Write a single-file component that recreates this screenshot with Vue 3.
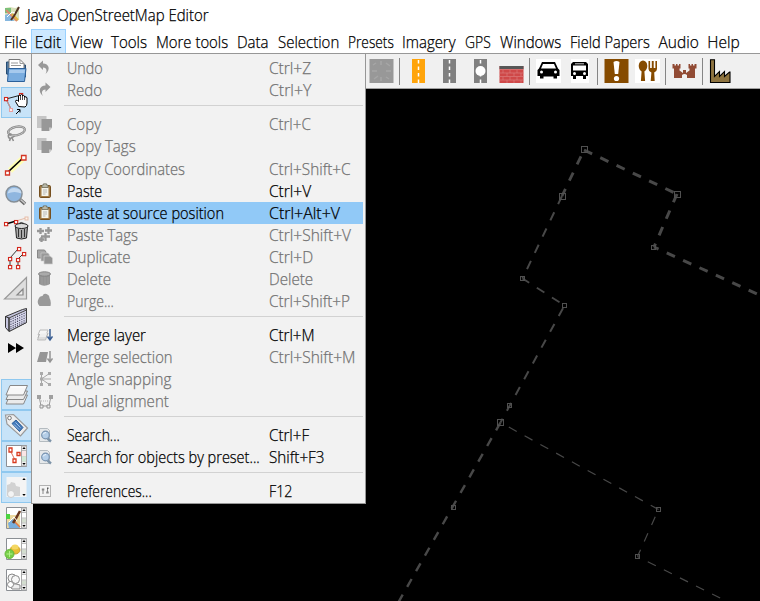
<script setup>
const vFit = {
  mounted(el, { value }) {
    const natural = el.offsetWidth
    if (value && natural) el.style.transform = `scaleX(${value / natural})`
  }
}

const menus = [
  ['File', 23], ['Edit', 26], ['View', 32], ['Tools', 36], ['More tools', 72],
  ['Data', 32], ['Selection', 61], ['Presets', 46], ['Imagery', 54], ['GPS', 26],
  ['Windows', 61], ['Field Papers', 80], ['Audio', 40], ['Help', 32]
]

const clipboard = '<rect x="2.5" y="2.5" width="11" height="12" rx="1.2" fill="#a17a45" stroke="#765020"/><rect x="4.5" y="4.5" width="7" height="8.5" fill="#f4f4ec"/><path d="M5 4.5V2h1.5V.8h3V2H11v2.500z" fill="#b8b8a8" stroke="#686858" stroke-width=".7"/><path d="M6 7h4M6 9h4M6 11h2.500" stroke="#aaa" stroke-width=".8"/>'
const copyIcon = '<path d="M0 0h9.500v12H0z" fill="#c5c5c5"/><path d="M4.500 3h10.500v8.500L12 15H4.500z" fill="#989898"/><path d="M15 11.500h-3V15z" fill="#c9c9c9"/>'
const magnifier = '<path d="M2.500 1.500h8l2 2v11h-10z" fill="#e5e8ea" stroke="#b4bbc0"/><path d="M10.500 11.500l3.500 3" stroke="#7d93a8" stroke-width="2.400"/><circle cx="8.500" cy="8" r="3.800" fill="#b4cee8" stroke="#7893b0" stroke-width="1.200"/><path d="M6 7.500q1-2 3-2" stroke="#eef6ff" fill="none"/>'

const entries = [
  { t: 'Undo', w: 36, k: 'Ctrl+Z', kw: 42, off: true, i: '<path d="M1 5L6 .5v3c6 0 8 6 2.500 10.500C10.500 10.500 9.500 7.500 6 7.500V10z" fill="#989898"/>' },
  { t: 'Redo', w: 35, k: 'Ctrl+Y', kw: 42, off: true, i: '<path d="M13.500 5L8.500 .5v3C2.500 3.500 .5 9.500 6 14 4 10.500 5 7.500 8.500 7.500V10z" fill="#989898"/>' },
  { sep: true },
  { t: 'Copy', w: 34, k: 'Ctrl+C', kw: 42, off: true, i: copyIcon },
  { t: 'Copy Tags', w: 69, off: true, i: copyIcon },
  { t: 'Copy Coordinates', w: 118, k: 'Ctrl+Shift+C', kw: 82, off: true, tall: true },
  { t: 'Paste', w: 35, k: 'Ctrl+V', kw: 42, i: clipboard },
  { t: 'Paste at source position', w: 157, k: 'Ctrl+Alt+V', kw: 71, hot: true, i: clipboard },
  { t: 'Paste Tags', w: 71, k: 'Ctrl+Shift+V', kw: 82, off: true, i: '<path d="M0 4h7M3.500 1v6M8 3.500h7M11.500 0v7M4 9.500h9M8.500 6v8M2 12.500h5M4.500 10v5" stroke="#969696" stroke-width="2.300"/>' },
  { t: 'Duplicate', w: 64, k: 'Ctrl+D', kw: 44, off: true, i: '<path d="M.5 1h7l1.500 2v6h-8.500z" fill="#a6a6a6" stroke="#888"/><path d="M4 4h7l1.500 2v6H4z" fill="#999" stroke="#d0d0d0" stroke-width=".6"/><path d="M7 7h6l2.500 2v6H7z" fill="#949494" stroke="#d0d0d0" stroke-width=".7"/>' },
  { t: 'Delete', w: 44, k: 'Delete', kw: 44, off: true, i: '<path d="M2 3v10q5 3.500 11 0V3z" fill="#949494"/><ellipse cx="7.500" cy="3" rx="6" ry="2.200" fill="#aaa" stroke="#858585"/><path d="M5 6v8M8 6v8M11 6v8" stroke="#a4a4a4" stroke-width=".6"/>' },
  { t: 'Purge...', w: 47, k: 'Ctrl+Shift+P', kw: 81, off: true, i: '<path d="M1.500 6q1-3 4-3 1-3 4-2 3 1 3 4 2 3 1 8h-11q-3-3-1-7z" fill="#999"/>' },
  { sep: true },
  { t: 'Merge layer', w: 79, k: 'Ctrl+M', kw: 46, i: '<path d="M3 3h8l-2 5H1z" fill="#f5f5f5" stroke="#bbb"/><path d="M2.500 7L1 11h8l2-5" fill="#eee" stroke="#aaa"/><path d="M1.500 10L.5 13h8l1-3" fill="#ddd" stroke="#bbb"/><path d="M13 2v10M10.500 9.500L13 13l2.500-3.500" fill="none" stroke="#3b5f93" stroke-width="1.500"/>' },
  { t: 'Merge selection', w: 106, k: 'Ctrl+Shift+M', kw: 86, off: true, i: '<path d="M3 3h8L9 13H0z" fill="#969696"/><path d="M13 2v10M10.500 9.500L13 13l2.500-3.500" fill="none" stroke="#949494" stroke-width="1.500"/>' },
  { t: 'Angle snapping', w: 104, off: true, i: '<path d="M4.500 3v11M4.500 8L13 2M4.500 8H14M4.500 8l8.500 6" stroke="#a7a7a7" fill="none"/><path d="M3 1h3v3H3zM3 12h3v3H3zM3 6.500h3v3H3zM11 1h3v3h-3zM11 12h3v3h-3z" fill="#aaa"/>' },
  { t: 'Dual alignment', w: 102, off: true, i: '<path d="M2 3l2 10h8l2-10" stroke="#999" fill="none"/><path d="M3 12h3v3H3zM10 12h3v3h-3z" fill="#eee" stroke="#929292"/><path d="M0 2h4v4H0zM12 2h4v4h-4z" fill="#a0a0a0"/><path d="M4 8l8 0" stroke="#b5b5b5" stroke-dasharray="1 1"/>' },
  { sep: true },
  { t: 'Search...', w: 53, k: 'Ctrl+F', kw: 40, i: magnifier },
  { t: 'Search for objects by preset...', w: 193, k: 'Shift+F3', kw: 55, i: magnifier },
  { sep: true },
  { t: 'Preferences...', w: 85, k: 'F12', kw: 23, i: '<rect x="2.500" y="2.500" width="11" height="11" fill="#f4f4f4" stroke="#b2b2b2"/><path d="M6 6v5M10.500 5v5" stroke="#888"/><path d="M4.800 5.500h2.500v2H4.800zM9.200 8.500h2.500v2H9.200z" fill="#888"/><path d="M10 4.500h1.500V6H10z" fill="#555"/>' }
]

const sq = (x, y) => `<rect x="${x - 1.5}" y="${y - 1.5}" width="3.200" height="3.200" fill="#fff" stroke="#d3261b" stroke-width="1.100"/>`

const tools = [
  { i: '<path d="M5.500 18V6h7l2 3h10v12z" fill="#51799f" stroke="#264c73"/><path d="M8 3.500h11l4 4V20H8z" fill="#fff" stroke="#777"/><path d="M19 3.500v4h4M10 7h7M10 9.500h10" fill="none" stroke="#999"/><path d="M7.500 12.500h17.500L23.500 25.500H6.500z" fill="#79acdf" stroke="#2c609a"/><path d="M8.500 14h15.500l-.5 3H8z" fill="#a6c9ed"/>' },
  { on: true, i: '<path d="M5 12l15-4M5 12l5 10" stroke="#222" fill="none"/><path d="M6 14l4 8" stroke="#e8a6a6"/>' + sq(5, 12) + sq(20, 8) + '<rect x="8.500" y="21.500" width="3" height="3" fill="#fee" stroke="#e7a0a0"/><path d="M17.500 19.500l-3-5q0-2 2-1l1 1V9q1-2 2 0V8q1-1 2 0v1q1-1 2 0v1q2-1 2.500 1v5q0 3-2 4z" fill="#fff" stroke="#000"/><path d="M19.500 9v4M21.500 9v4M23.500 10v3" stroke="#000" stroke-width=".7"/><path d="M15 27l4-4M16 22.500h3v3" stroke="#000" fill="none"/>' },
  { i: '<ellipse cx="15.500" cy="13" rx="8.500" ry="4.200" transform="rotate(-12 15.500 13)" fill="none" stroke="#858585" stroke-width="2.400"/><ellipse cx="15.500" cy="13" rx="8.500" ry="4.200" transform="rotate(-12 15.500 13)" fill="none" stroke="#ccc" stroke-width=".8"/><path d="M10.500 16q-4 0-3 3t6-1M10.500 19l2 4M9.500 20l-1 3" stroke="#8d8d8d" stroke-width="1.600" fill="none"/>' },
  { i: '<path d="M9 21.500L23 8.500" stroke="#ffffb4" stroke-width="6"/><path d="M7 23L23 8" stroke="#000" stroke-width="1.700"/><path d="M4.500 22h4v4h-4zM20.500 6.500h4.500v4.500h-4.500z" fill="#fff" stroke="#d33524" stroke-width="1.300"/>' },
  { i: '<path d="M18.500 19l5.500 5" stroke="#686868" stroke-width="3.500"/><path d="M19.500 19.500l4.500 4" stroke="#c8c8c8" stroke-width="1.500"/><circle cx="13" cy="14" r="8" fill="#8fb6df" stroke="#858e96" stroke-width="1.500"/><path d="M6.500 13.500q2-7 10-5 4 1 4 5-7-3-14 0z" fill="#c3d9f0"/>' },
  { i: '<path d="M5 13l10-3" stroke="#000" stroke-width="1.500"/><path d="M15 10l10-3" stroke="#e5bda9"/>' + sq(5, 13) + sq(15, 11) + '<rect x="24" y="6" width="3" height="3" fill="#fdf1e8" stroke="#e5bda9"/><path d="M14.500 15.500h12l-1 11.500q-5 2-10 0z" fill="#aaa" stroke="#222"/><ellipse cx="20.500" cy="15" rx="6.500" ry="2.500" fill="#d9d9d9" stroke="#222"/><path d="M18 12.500q2-2 5 0M17.500 18v8M20.500 19v8M23.500 18v8" stroke="#333" fill="none"/>' },
  { i: '<path d="M9 25v-9l8-9M17 24v-7l6-6" stroke="#333" fill="none"/>' + sq(9, 25) + sq(9, 17) + sq(18, 7) + sq(17, 25) + sq(17, 18) + sq(23, 12) },
  { i: '<path d="M3.500 26L25.500 4.500V26z" fill="#dedede" stroke="#999" stroke-width="1.200"/><path d="M16 22l6-6v6z" fill="#eee" stroke="#858585" stroke-width="1.200"/>' },
  { i: '<path d="M4.500 12.500l17-7 4-1v14L8 27.500 4.500 23.500z" fill="#c5c5de" stroke="#333"/><path d="M8 14L25.500 6v12.500L8 27.500z" fill="#d6d6ea" stroke="#444"/><path d="M9.500 15.500L25 8.500M9.500 18l15.500-7M9.500 20.500l15.500-7M9.500 23l15.500-7M9.500 25l15.500-7" stroke="#303048" stroke-width="1.100" stroke-dasharray="1 1.400"/><path d="M4.500 12.500l3.500 1.500v13" fill="none" stroke="#222"/>' }
]

const scroll = '<path d="M5.500 4.500h20v21h-20z" fill="#fff" stroke="#8b8f94"/><path d="M20.500 5h5v20h-5z" fill="#eee" stroke="#aaa"/><path d="M21 10h4v5h-4z" fill="#fff"/><path d="M21 15.500h4v4h-4z" fill="#d3ddcf"/><path d="M21 9.500h4M21 15h4M21 20h4" stroke="#bbb"/><path d="M21.300 8L23 6l1.700 2zM21.300 22L23 24l1.700-2z" fill="#000"/>'
const toggles = [
  { on: true, i: '<g fill="#ebebeb" stroke="#888"><path d="M9 16h17.500l-4 9H5z"/><path d="M9 12h17.500l-4 8.500H5z"/><path d="M9 6.500h17.500l-4 9.500H5z" fill="#f7f7f7"/></g><path d="M10 8h15" stroke="#fff"/>' },
  { on: true, i: '<path d="M4.500 5l8-.5L26.500 18l-7 8L6 14z" fill="#eee" stroke="#999" stroke-width="1.200"/><circle cx="8.500" cy="8" r="1.800" fill="#fff" stroke="#777"/><path d="M11 13.500l4-3.500 7 7.500-3.500 4z" fill="#447abb" stroke="#2b609c"/><path d="M14.500 12.500l5 5M13 14.500l5 5" stroke="#a2c3e8"/>' },
  { on: true, i: scroll + '<path d="M9.500 10l4.500 9" stroke="#e06b54" fill="none"/><path d="M8 7h3v4H8zM16 11.500h3v3h-3zM12 18h3v3.500h-3z" fill="#fff" stroke="#d83b20" stroke-width="1.300"/><path d="M21 10h4v5h-4z" fill="#fbe6e6"/><path d="M21 15.500h4v5h-4z" fill="#cee9d4"/>' },
  { on: true, i: '<path d="M5.500 5h20v20h-20z" fill="#f4f4f4"/><path d="M6 20v-7l3-1 1-2 4 1 1 3 4 1v9H6z" fill="#d2d2d2"/><circle cx="10" cy="22" r="3.500" fill="#f4f4f4" stroke="#ccc"/><path d="M21.300 8L23 6l1.700 2zM21.300 22L23 24l1.700-2z" fill="#000"/>' },
  { i: scroll + '<path d="M6 12h13v13H6z" fill="#ecd9a0"/><path d="M7 20l5-4 7 9H8z" fill="#79aedd"/><path d="M5 11h4v5H5z" fill="#4bd440"/><path d="M14 19l5 5" stroke="#e87a3d" stroke-width="1.500"/><path d="M19 8l-5 9-2 3" stroke="#68361c" stroke-width="2.500" fill="none"/><path d="M8 19l5-5 3 4" stroke="#fff" fill="none"/>' },
  { i: scroll + '<ellipse cx="14" cy="16" rx="5" ry="4" fill="#e9bd34" stroke="#c8a030"/><ellipse cx="14" cy="13" rx="3.500" ry="2.500" fill="#f4d762"/><circle cx="8.500" cy="20" r="4.500" fill="#77cf48" stroke="#66b93d"/><path d="M8.500 17v6M5.500 20h6" stroke="#b4f18b"/>' },
  { i: scroll + '<circle cx="11" cy="13" r="4" fill="#f7f7f7" stroke="#888"/><circle cx="14.500" cy="14.500" r="4" fill="#f7f7f7" stroke="#888"/><path d="M9 21q3-3 6-2l4 1v4h-8z" fill="#eee" stroke="#888"/><circle cx="9.500" cy="19.500" r="3" fill="#fff" stroke="#888"/>' }
]

const road = (c) => `<path d="M6 0h13v24H6z" fill="${c}"/><path d="M12.500 1v23" stroke="#fff" stroke-width="1.500" stroke-dasharray="3.500 3"/>`
const bar = [
  { i: '<path d="M.5 0h24v24h-24z" fill="#989898"/><path d="M4 6l3-2M17 4l4 3M3 12h5M17 12h5M5 20l4-3M17 18l3 2M12 2v4M12 18v4" stroke="#a6a6a6" stroke-width="1.500"/>' },
  { sep: true },
  { i: road('#ffa40b') }, { i: road('#808080') },
  { i: road('#808080') + '<circle cx="12.500" cy="12" r="5" fill="#fff"/>' },
  { i: '<path d="M.5 7h24v17H.5z" fill="#cf4848"/><path d="M.5 7h24v3H.5z" fill="#575757"/><path d="M.5 10.500h24M.5 14h24M.5 17.500h24M.5 21h24M4 11v3M11 11v3M18 11v3M8 14v3M15 14v3M22 14v3M4 18v3M11 18v3M18 18v3M8 21v3M15 21v3M22 21v3" stroke="#dd8585" stroke-width=".6"/>' },
  { sep: true },
  { i: '<path d="M0 0h25v24H0z" fill="#fff"/><path d="M6 3h13l3 6.500 1.500 1.500v6h-2.500v2.500h-3.500V17.500h-10v2H4V17H1.500v-6L3 9.500z" fill="#000"/><path d="M7 5h11l2 4.500H5z" fill="#fff"/><circle cx="5.500" cy="13" r="1.500" fill="#fff"/><circle cx="19.500" cy="13" r="1.500" fill="#fff"/>' },
  { i: '<path d="M4 0h18v24H4z" fill="#fff"/><path d="M6 3h13l2 2v12h-2v3h-3v-3H9v3H6v-3H4V5z" fill="#000"/><path d="M6 6.500h13v5H6z" fill="#fff"/><circle cx="7.500" cy="14.500" r="1.500" fill="#fff"/><circle cx="17.500" cy="14.500" r="1.500" fill="#fff"/><path d="M8 4.800h9" stroke="#fff" stroke-width=".8"/>' },
  { sep: true },
  { i: '<path d="M.5 0h24v24H.5z" fill="#864b00"/><path d="M9.500 3q3-2 6 0l-1.300 12h-3.400z" fill="#fff"/><circle cx="12.500" cy="19.500" r="2.600" fill="#fff"/>' },
  { i: '<path d="M0 0h25v24H0z" fill="#fff"/><ellipse cx="8" cy="7" rx="4.300" ry="5.500" fill="#864b00"/><path d="M6.700 11h2.600l.8 11H5.900zM13.500 2h1.600v7h1.700V2h1.900v7h1.700V2H22v8q-.3 3-2.800 3.500l.5 8.500h-4l.7-8.500q-2.600-.5-2.900-3.500z" fill="#864b00"/>' },
  { sep: true },
  { i: '<path d="M.5 5h2v1.500h1.500V5h1.500v1.500H7V5h1.500v4.500h-1v2l3.500 2.500V11h3v3l3.500-2.500v-2h-1V5H18v1.500h1.500V5H21v1.500h1.500V5h2v4.500h-1.500V19H15v-3q-2.500-2-5 0v3H2V9.500H.5z" fill="#914b34"/>' },
  { sep: true },
  { i: '<path d="M1.500.7h4v14V17.500l5-5v5l5-5v5l5-4.500.5 0v10.500h-19.500z" fill="#8d733f" stroke="#000" stroke-width="1.100"/>' }
]

const ways = [
  [584, 150, 677, 194, 3, 0], [677, 194, 654, 247, 3, 0], [654, 247, 768, 299, 3, 4],
  [584, 150, 562, 196, 2.8, 11], [562, 196, 522.5, 278.5, 2, 0],
  [522.5, 278.5, 564.5, 305.5, 1.8, 1], [564.5, 305.5, 500.5, 422.5, 2, 15],
  [500.5, 422.5, 398, 603, 2.4, 0], [500.5, 422.5, 658.5, 509.5, 1.2, 8.5],
  [658.5, 509.5, 637.5, 556.5, 1.2, 10], [637.5, 556.5, 721, 598.5, 1.2, 6.5]
]
const nodes = [
  [584.5, 149.5, 6], [677.5, 194.5, 6], [562.5, 196.5, 6], [500.5, 422.5, 6],
  [653.5, 247.5, 4], [522.5, 278.5, 4], [564.5, 305.5, 4], [509.5, 405.5, 4],
  [453.5, 507.5, 4], [658.5, 509.5, 4], [637.5, 556.5, 4]
]
</script>

<template>
  <div class="window">
    <header class="title">
      <svg class="logo" viewBox="0 0 17 17">
        <path d="M1 2l5-1 5 1 4-1v13l-4 1-5-1-5 1z" fill="#d8dfb9" />
        <path d="M1 2h6v5H1z" fill="#79c37b" /><path d="M1 9l6-2 3 8H1z" fill="#85b7df" />
        <path d="M2 4l11 11" stroke="#dc8a70" stroke-width="2" /><path d="M8 8l6 6" stroke="#e3b53d" stroke-width="2" />
        <path d="M15 1l-5 9-3 4" stroke="#503222" stroke-width="2" fill="none" />
        <path d="M3 11l5-5 3 1" stroke="#fff" fill="none" />
      </svg>
      <span v-fit="181" class="fit">Java OpenStreetMap Editor</span>
    </header>
    <nav class="menubar">
      <div v-for="m in menus" :key="m[0]" class="menu" :class="{ open: m[0] === 'Edit' }" :style="{ width: m[1] + 8.8 + 'px' }">
        <span v-fit="m[1]" class="fit">{{ m[0] }}</span>
      </div>
    </nav>
    <main class="body">
      <aside class="side">
        <div v-for="(t, n) in tools" :key="n" class="tool" :class="{ on: t.on }">
          <svg viewBox="0 0 31 31" v-html="t.i"></svg>
        </div>
        <div class="more"><svg viewBox="0 0 31 24"><path d="M7 8l8 5-8 5zM15 8l8 5-8 5z" /></svg></div>
        <div v-for="(t, n) in toggles" :key="'t' + n" class="tool" :class="{ on: t.on }">
          <svg viewBox="0 0 31 31" v-html="t.i"></svg>
        </div>
      </aside>
      <section class="work">
        <div class="toolbar">
          <template v-for="(b, n) in bar" :key="n">
            <i v-if="b.sep" class="vsep"></i>
            <div v-else class="preset"><svg viewBox="0 0 25 24" v-html="b.i"></svg></div>
          </template>
        </div>
        <svg class="map" viewBox="33 89 727 512">
          <line v-for="(w, n) in ways" :key="n" :x1="w[0]" :y1="w[1]" :x2="w[2]" :y2="w[3]" :stroke-width="w[4]" :stroke-dashoffset="w[5]" stroke="#484848" stroke-dasharray="9 9" />
          <rect v-for="(p, n) in nodes" :key="'n' + n" :x="p[0] - p[2] / 2" :y="p[1] - p[2] / 2" :width="p[2]" :height="p[2]" fill="none" stroke="#505050" />
        </svg>
      </section>
    </main>
    <div class="popup">
      <template v-for="(e, n) in entries" :key="n">
        <div v-if="e.sep" class="sep"></div>
        <div v-else class="entry" :class="{ off: e.off, hot: e.hot, tall: e.tall }">
          <svg class="glyph" viewBox="0 0 16 16" v-html="e.i || ''"></svg>
          <div class="label"><span v-fit="e.w" class="fit">{{ e.t }}</span></div>
          <div class="keys"><span v-if="e.k" v-fit="e.kw" class="fit">{{ e.k }}</span></div>
        </div>
      </template>
    </div>
  </div>
</template>

<style>
body { background: #000; overflow: hidden; }
</style>
<style scoped>
.window { position: relative; width: 760px; height: 601px; display: flex; flex-direction: column; overflow: hidden; background: #fff; color: #000; font: 300 15.5px/22px "Open Sans", "Noto Sans", sans-serif; -webkit-text-stroke: 0.25px currentColor; }
.window * { box-sizing: border-box; }
svg { display: block; }
.fit { display: inline-block; white-space: nowrap; transform-origin: 0 50%; }
.title { height: 29px; flex: none; display: flex; align-items: center; gap: 6px; padding-left: 4px; }
.logo { width: 17px; height: 17px; }
.menubar { height: 25px; flex: none; display: flex; border-bottom: 1px solid #989898; }
.menu { flex: none; height: 24px; padding: 2px 0 0 4px; }
.menu.open { margin-left: -1px; margin-right: 1px; padding: 1px 0 0 3px; background: #cce8ff; border: 1px solid #99d1ff; border-bottom: 0; }
.body { flex: 1; min-height: 0; display: flex; }
.side { width: 33px; flex: none; padding: 2px 0 0 1px; background: #f0f0f0; }
.tool { width: 31px; height: 31px; }
.tool svg { width: 31px; height: 31px; }
.tool.on { background: #c7e3f8; border: 1px solid #8fc8ef; }
.tool.on svg { margin: -1px 0 0 -1px; }
.more { height: 24px; margin-bottom: 20px; }
.more svg { width: 31px; height: 24px; }
.work { flex: 1; min-width: 0; display: flex; flex-direction: column; background: #000; }
.toolbar { height: 35px; flex: none; display: flex; padding-left: 332.5px; background: #f0f0f0; border-bottom: 1px solid #a0a0a0; }
.preset { width: 31px; flex: none; padding: 5px 0 0 3px; }
.preset svg { width: 25px; height: 24px; }
.vsep { width: 1px; height: 27px; flex: none; margin: 4px 2.5px 0; background: #858585; }
.map { width: 727px; height: 512px; }
.popup { position: absolute; left: 31px; top: 53px; width: 335px; height: 451px; padding: 3px 2px 0; background: #f2f2f2; border: 1px solid #979797; }
.entry { height: 22px; display: flex; align-items: center; }
.entry.tall { height: 23px; }
.entry.off { color: #727272; }
.entry.hot { background: #91c9f7; }
.glyph { width: 16px; height: 16px; margin: -1px 0 0 3px; }
.label { width: 202px; margin-left: 14px; flex: none; }
.keys { flex: 1; }
.label, .keys { height: 22px; }
.sep { height: 12px; padding-top: 4px; margin-left: 30px; }
.sep::before { content: ""; display: block; height: 1px; background: #d2d2d2; }
</style>
